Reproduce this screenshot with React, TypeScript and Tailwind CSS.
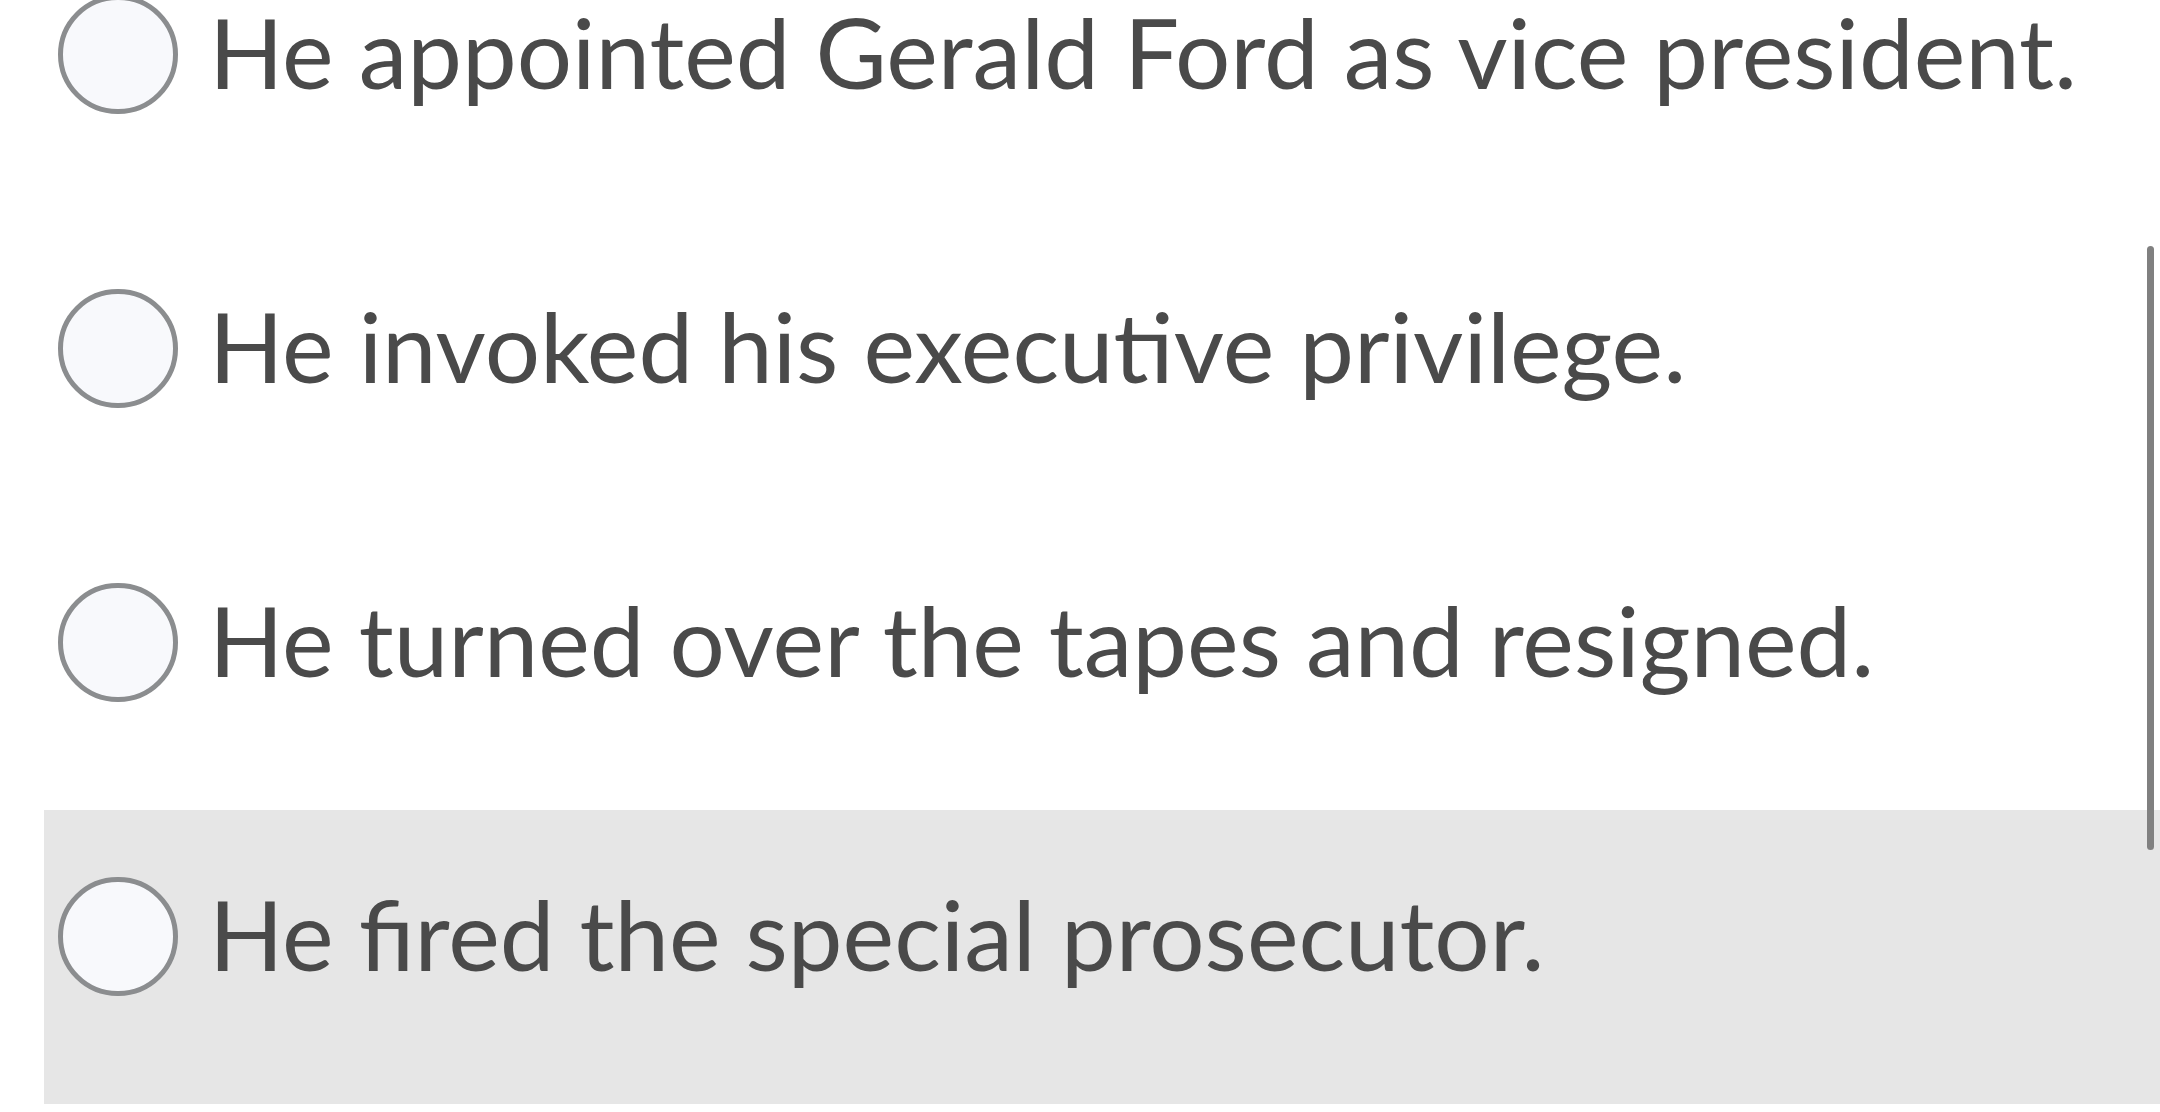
import React from 'react';

const options = [
  'He appointed Gerald Ford as vice president.',
  'He invoked his executive privilege.',
  'He turned over the tapes and resigned.',
  'He fired the special prosecutor.',
];

export default function App() {
  return (
    <div className="relative w-full h-[1112px] overflow-hidden bg-white" style={{ fontFamily: 'Lato, "Noto Sans", sans-serif' }}>
      <div className="flex flex-col -mt-[72px]">
        {options.map((text, i) => (
          <label
            key={text}
            className={`ml-[44px] h-[294px] pl-[14px] pt-[67px] flex items-start ${i === 3 ? 'bg-[#e6e6e6]' : 'bg-white'}`}
          >
            <span className="shrink-0 w-[120px] h-[119px] rounded-full border-[5px] border-[#8b8d8f] bg-[#f8f9fc]" />
            <span className="ml-[31px] text-[97.7px] leading-[113px] text-[#4a4a4a] whitespace-nowrap">{text}</span>
          </label>
        ))}
      </div>
      {/* scrollbar */}
      <div className="absolute right-[6px] top-[246px] w-[7px] h-[604px] rounded-full bg-[#808080]" />
    </div>
  );
}
